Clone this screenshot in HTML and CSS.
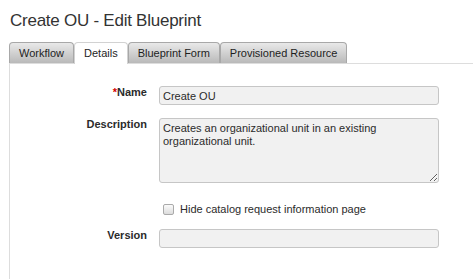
FILE: index.html
```html
<!DOCTYPE html>
<html lang="en">
<head>
  <meta charset="UTF-8" />
  <title>Create OU - Edit Blueprint</title>
  <link rel="stylesheet" href="styles.css">
</head>
<body>
  <h1 class="page-title">Create OU - Edit Blueprint</h1>

  <div class="tabs">
    <a class="tab">Workflow</a>
    <a class="tab active">Details</a>
    <a class="tab">Blueprint Form</a>
    <a class="tab">Provisioned Resource</a>
  </div>

  <div class="panel">
    <form class="form">
      <div class="row">
        <label class="field-label" for="bpName"><span class="req">*</span>Name</label>
        <input type="text" id="bpName" value="Create OU">
      </div>

      <div class="row">
        <label class="field-label" for="bpDesc">Description</label>
        <textarea id="bpDesc">Creates an organizational unit in an existing organizational unit.</textarea>
      </div>

      <div class="row">
        <label class="check">
          <input type="checkbox"> Hide catalog request information page
        </label>
      </div>

      <div class="row">
        <label class="field-label" for="bpVersion">Version</label>
        <input type="text" id="bpVersion">
      </div>
    </form>
  </div>
</body>
</html>
```

FILE: styles.css
```css
body {
  font-family: "Liberation Sans", Arial, sans-serif;
  color: #333;
  background: #fff;
  margin: 0;
}

.page-title {
  margin: 10px 0 0 10px;
  font-size: 17px;
  font-weight: normal;
  letter-spacing: -0.25px;
  line-height: 21px;
  color: #333;
}

.tabs {
  display: flex;
  align-items: flex-start;
  height: 21px;
  margin: 11px 0 0 9px;
}

.tab {
  height: 20px;
  padding: 0 9px;
  border: 1px solid #a8a8a8;
  border-bottom: none;
  border-radius: 4px 4px 0 0;
  background: linear-gradient(#e9e9e9, #b9b9b9);
  font-size: 11px;
  line-height: 20px;
  color: #1e1e1e;
  cursor: pointer;
}

.tab.active {
  height: 21px;
  background: #fff;
  border-color: #d2d2d2;
  position: relative;
  z-index: 1;
}

.panel {
  margin-left: 9px;
  border-top: 1px solid #ddd;
  border-left: 1px solid #ddd;
  min-height: 216px;
  padding-top: 22px;
  box-sizing: border-box;
}

.row {
  display: grid;
  grid-template-columns: 137px 280px;
  column-gap: 12px;
  align-items: start;
  margin-bottom: 13px;
}

.row:last-child {
  margin-bottom: 0;
}

.field-label {
  text-align: right;
  font-size: 11px;
  font-weight: bold;
  line-height: 13px;
  color: #2b2b2b;
}

.req {
  color: #d40000;
}

input[type="text"],
textarea {
  box-sizing: border-box;
  width: 280px;
  height: 19px;
  margin: 0;
  padding: 2px 3px;
  border: 1px solid #c6c6c6;
  border-radius: 3px;
  background: #f1f1f1;
  font-family: inherit;
  font-size: 11px;
  line-height: 13px;
  color: #2b2b2b;
}

textarea {
  height: 65px;
  padding: 3px;
  margin-bottom: 4px;
}

.check {
  grid-column: 2;
  display: flex;
  align-items: center;
  gap: 6px;
  margin: 3px 0 0 4px;
  font-size: 11px;
  line-height: 13px;
  color: #2b2b2b;
}

.check input {
  appearance: none;
  width: 11px;
  height: 11px;
  margin: 0;
  border: 1px solid #aaa;
  border-radius: 2px;
  background: linear-gradient(#fbfbfb, #dcdcdc);
}
```
